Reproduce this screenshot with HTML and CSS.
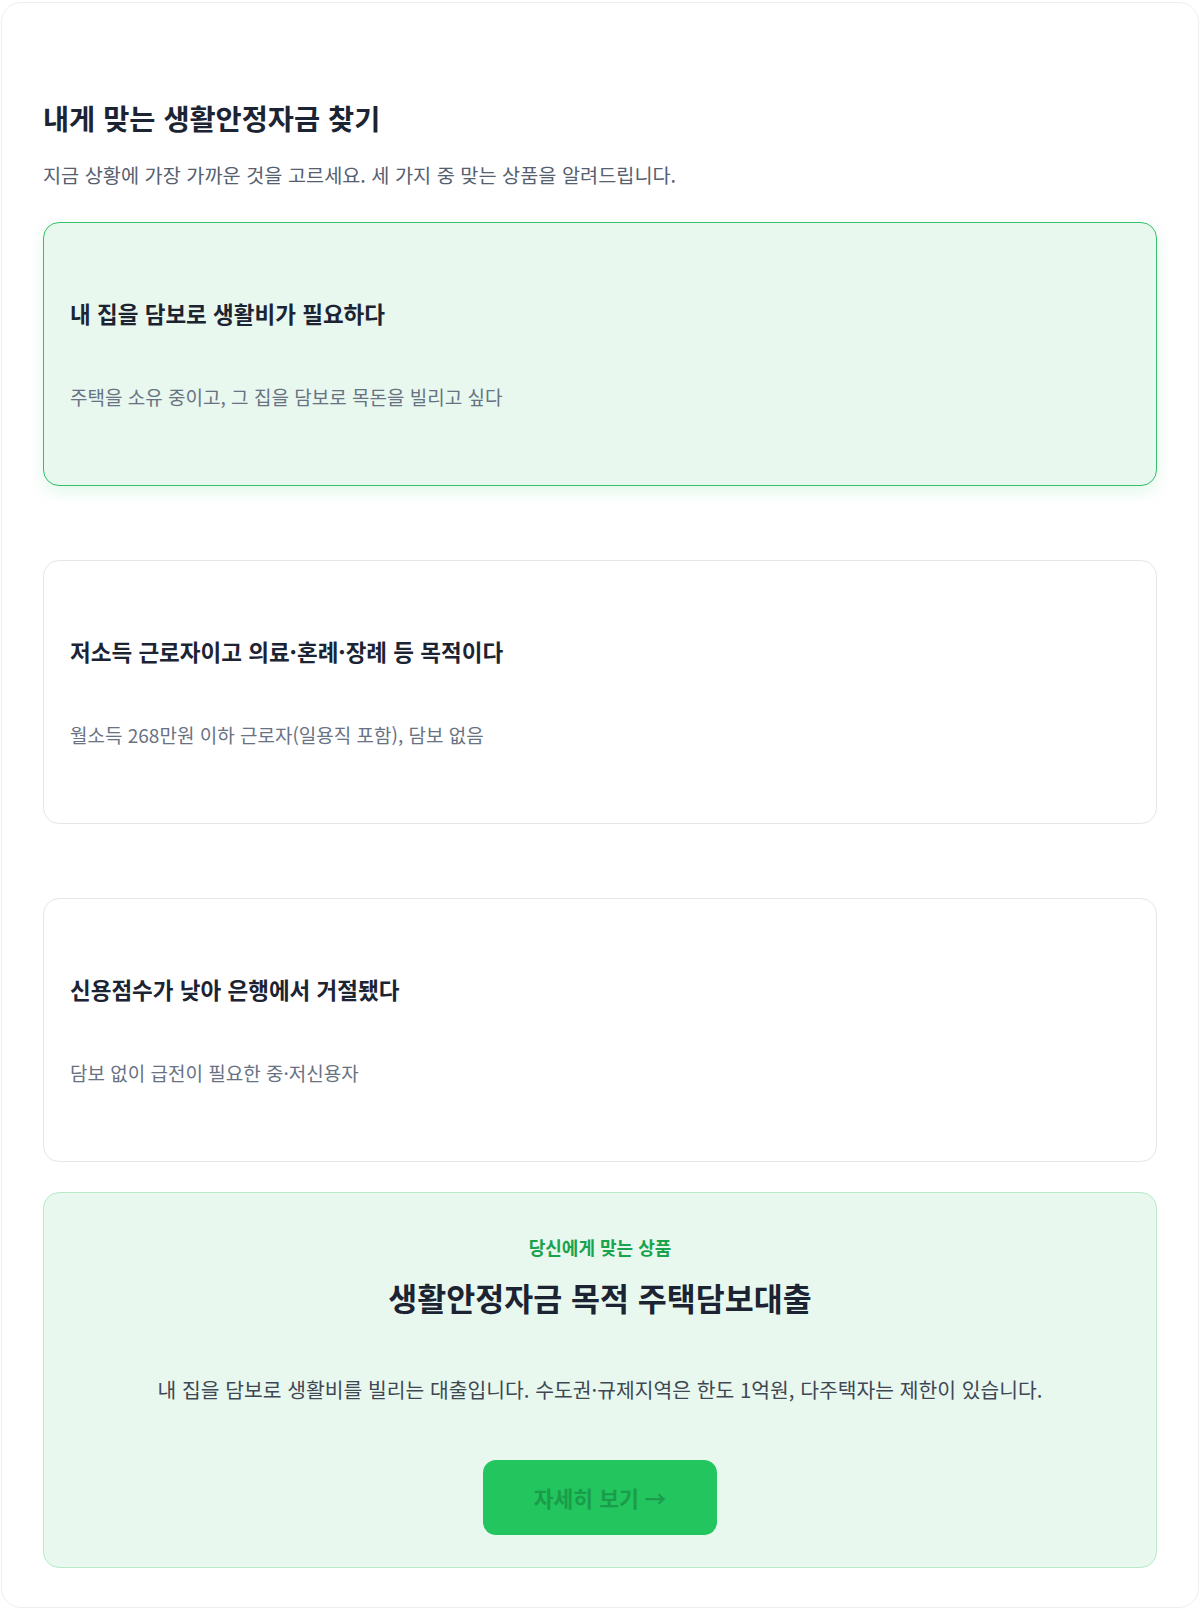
FILE: index.html
```html
<!DOCTYPE html>
<html lang="ko">
<head>
<meta charset="utf-8">
<title>내게 맞는 생활안정자금 찾기</title>
<link rel="stylesheet" href="styles.css">
</head>
<body>
<main class="page">
  <h1 class="page-title">내게 맞는 생활안정자금 찾기</h1>
  <p class="page-sub">지금 상황에 가장 가까운 것을 고르세요. 세 가지 중 맞는 상품을 알려드립니다.</p>

  <div class="options">
    <button class="option option--active" type="button">
      <span class="option-title">내 집을 담보로 생활비가 필요하다</span>
      <span class="option-desc">주택을 소유 중이고, 그 집을 담보로 목돈을 빌리고 싶다</span>
    </button>
    <button class="option" type="button">
      <span class="option-title">저소득 근로자이고 의료·혼례·장례 등 목적이다</span>
      <span class="option-desc">월소득 268만원 이하 근로자(일용직 포함), 담보 없음</span>
    </button>
    <button class="option" type="button">
      <span class="option-title">신용점수가 낮아 은행에서 거절됐다</span>
      <span class="option-desc">담보 없이 급전이 필요한 중·저신용자</span>
    </button>
  </div>

  <section class="result">
    <p class="result-label">당신에게 맞는 상품</p>
    <h2 class="result-title">생활안정자금 목적 주택담보대출</h2>
    <p class="result-desc">내 집을 담보로 생활비를 빌리는 대출입니다. 수도권·규제지역은 한도 1억원, 다주택자는 제한이 있습니다.</p>
    <a class="result-btn" href="#">자세히 보기 →</a>
  </section>
</main>
</body>
</html>
```

FILE: styles.css
```css
* { box-sizing: border-box; }

html, body {
  margin: 0;
  padding: 0;
  background: #ffffff;
}

body {
  font-family: "Noto Sans CJK KR", "Noto Sans", sans-serif;
  color: #1f2937;
}

.page {
  margin: 2px 1px 1px 1px;
  border: 1px solid #eceef1;
  border-radius: 20px;
  padding: 98px 41px 39px 41px;
}

.page-title {
  margin: 0;
  font-size: 28.4px;
  line-height: 34px;
  font-weight: 700;
  color: #1c2433;
}

.page-sub {
  margin: 27px 0 0 0;
  font-size: 19.7px;
  line-height: 26px;
  color: #556070;
}

.options {
  margin-top: 34px;
  display: flex;
  flex-direction: column;
  gap: 74px;
}

.option {
  display: flex;
  flex-direction: column;
  align-items: flex-start;
  width: 100%;
  height: 264px;
  padding: 75px 26px;
  border: 1px solid #e3e6ea;
  border-radius: 16px;
  background: #ffffff;
  font-family: inherit;
  text-align: left;
  cursor: pointer;
}

.option--active {
  border-color: #34c068;
  background: #e8f8ee;
  box-shadow: 0 6px 16px rgba(34, 197, 94, 0.13);
}

.option-title {
  font-size: 22.5px;
  line-height: 30px;
  font-weight: 700;
  color: #1c2433;
}

.option-desc {
  margin-top: 56px;
  font-size: 19px;
  line-height: 26px;
  color: #687282;
}

.result {
  margin-top: 30px;
  border: 1px solid #b9e9c9;
  border-radius: 16px;
  background: #e8f8ee;
  padding: 43px 24px 32px;
  display: flex;
  flex-direction: column;
  align-items: center;
  text-align: center;
}

.result-label {
  margin: 0;
  font-size: 18px;
  line-height: 22px;
  font-weight: 700;
  color: #1aa34c;
}

.result-title {
  margin: 20px 0 0 0;
  font-size: 31.5px;
  line-height: 38px;
  font-weight: 700;
  color: #1c2433;
}

.result-desc {
  margin: 59px 0 0 0;
  font-size: 20.4px;
  line-height: 28px;
  color: #3f4754;
}

.result-btn {
  margin-top: 57px;
  display: flex;
  align-items: center;
  justify-content: center;
  width: 234px;
  height: 75px;
  border-radius: 13px;
  background: #22c55e;
  color: #1b9c4a;
  font-size: 21.5px;
  font-weight: 700;
  text-decoration: none;
}
```
